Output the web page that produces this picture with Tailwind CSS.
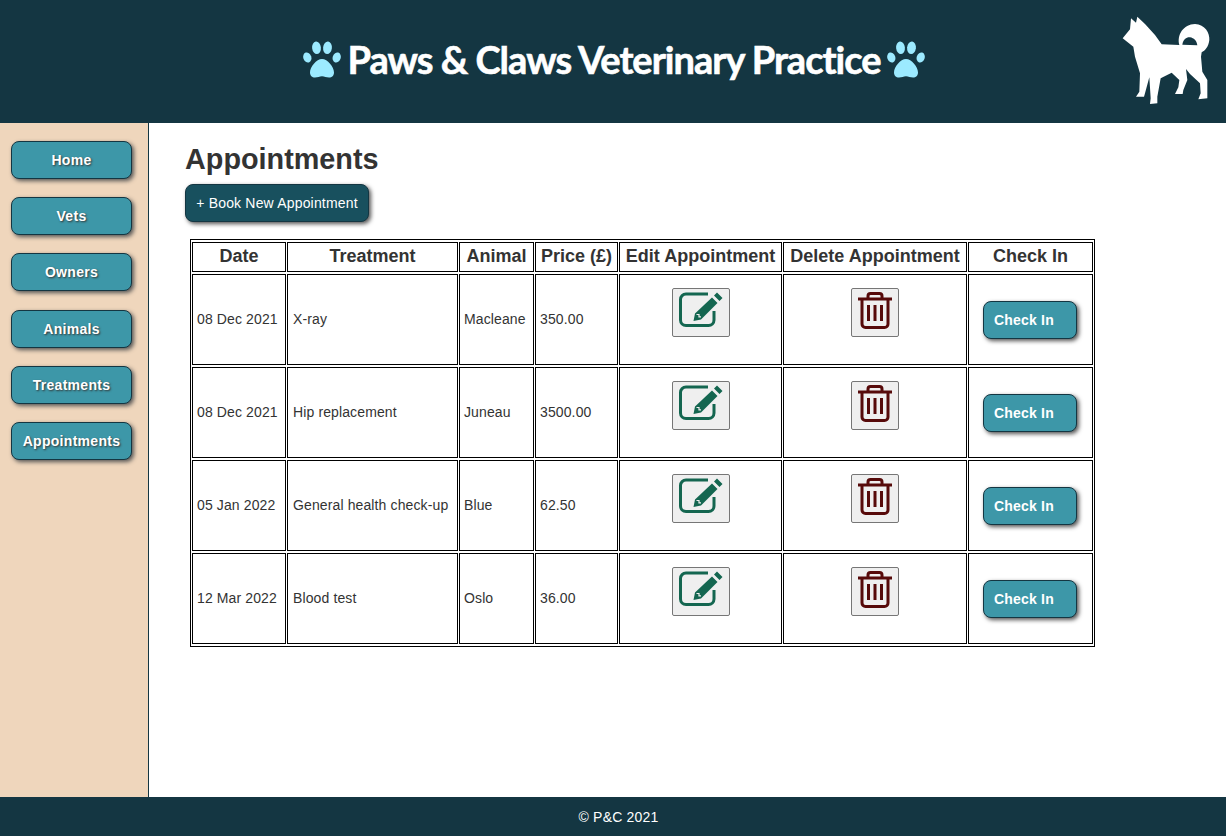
<!DOCTYPE html>
<html lang="en">
<head>
  <meta charset="UTF-8" />
  <title>Paws &amp; Claws Veterinary Practice</title>
  <script src="https://cdn.jsdelivr.net/npm/@tailwindcss/browser@4"></script>
</head>
<body class="h-[836px] flex flex-col overflow-hidden bg-white font-['Liberation_Sans',Arial,sans-serif] text-[#333]">
  <svg class="hidden">
    <symbol id="paw" viewBox="0 0 38 37">
      <ellipse cx="4.300" cy="16.500" rx="4" ry="5.200" transform="rotate(-18 4.300 16.500)" />
      <ellipse cx="13.500" cy="6.800" rx="4.400" ry="6.300" transform="rotate(-6 13.500 6.800)" />
      <ellipse cx="24.500" cy="6.800" rx="4.400" ry="6.300" transform="rotate(6 24.500 6.800)" />
      <ellipse cx="33.700" cy="16.500" rx="4" ry="5.200" transform="rotate(18 33.700 16.500)" />
      <path d="M19 18c-5.500 0-12 8-12 13.500 0 3 2 5 5 5 2.800 0 4.500-1.300 7-1.300s4.200 1.300 7 1.300c3 0 5-2 5-5C31 26 24.500 18 19 18z" />
    </symbol>
    <symbol id="edit" viewBox="0 0 44 35">
      <path d="M35 19v9a5.500 5.500 0 0 1-5.500 5.500H7A5.500 5.500 0 0 1 1.500 28V7.500A5.500 5.500 0 0 1 7 2h22" fill="none" stroke="currentColor" stroke-width="3" />
      <path d="M38 .5l5.500 5.500-3 3-5.500-5.500zM33 5.500l5.500 5.500-16.500 16.500-7.500 1.500 1.500-7.500z" fill="currentColor" />
      <path d="M17.500 22.500l2.500 0 0 2.300 2 0" fill="none" stroke="#efefef" stroke-width="1.200" />
    </symbol>
    <symbol id="trash" viewBox="0 0 34 37">
      <path d="M0 7h34" fill="none" stroke="currentColor" stroke-width="3" />
      <path d="M10 6.500V4a2.500 2.500 0 0 1 2.500-2.500h9A2.500 2.500 0 0 1 24 4v2.500" fill="none" stroke="currentColor" stroke-width="3" />
      <path d="M4 7v25a3.500 3.500 0 0 0 3.500 3.500h19A3.500 3.500 0 0 0 30 32V7" fill="none" stroke="currentColor" stroke-width="3" />
      <path d="M10.500 13v16M17 13v16M23.500 13v16" fill="none" stroke="currentColor" stroke-width="3" />
    </symbol>
  </svg>

  <header class="h-[123px] shrink-0 bg-[#143642] relative flex items-center justify-center gap-[6px] pb-[5px] pl-[2px]">
    <svg class="w-[38px] h-[37px] fill-[#9ceaff]"><use href="#paw" /></svg>
    <h1 class="font-['Lato',sans-serif] font-bold text-white text-[38px] leading-none tracking-[-1px] [-webkit-text-stroke:0.6px_white]">Paws &amp; Claws Veterinary Practice</h1>
    <svg class="w-[38px] h-[37px] fill-[#9ceaff]"><use href="#paw" /></svg>
    <svg class="absolute right-0 top-0 w-[126px] h-[125px] fill-white" viewBox="0 0 378 375">
      <path fill-rule="evenodd" d="M68 115L90 88 93 55 108 68 112 50 135 72 165 105 185 133 238 135C230 105 250 73 285 72 315 73 330 100 328 120 326 140 315 152 305 157L303 170 307 215 322 240 322 295 295 298 302 280 300 250 270 222 258 207 262 240 250 270 248 282 225 282 235 262 238 240 215 218 182 235 172 290 172 310 150 312 152 295 148 232 135 280 132 290 108 290 118 275 120 220 105 170 100 140 85 128ZM247 134C250 117 260 111 270 112 282 114 290 122 292 136Z" />
    </svg>
  </header>

  <div class="flex-1 flex min-h-0">
    <nav class="w-[149px] shrink-0 bg-[#efd6bc] border-r border-[#143642] pt-[18px] pl-[11px] flex flex-col gap-[18.200px]">
      <a class="w-[121px] h-[38px] flex items-center justify-center rounded-lg border border-[#143642] bg-[#3d97a8] text-white text-sm font-bold tracking-[0.3px] shadow-[2px_2px_4px_#555] [text-shadow:1px_1px_2px_#333]">Home</a>
      <a class="w-[121px] h-[38px] flex items-center justify-center rounded-lg border border-[#143642] bg-[#3d97a8] text-white text-sm font-bold tracking-[0.3px] shadow-[2px_2px_4px_#555] [text-shadow:1px_1px_2px_#333]">Vets</a>
      <a class="w-[121px] h-[38px] flex items-center justify-center rounded-lg border border-[#143642] bg-[#3d97a8] text-white text-sm font-bold tracking-[0.3px] shadow-[2px_2px_4px_#555] [text-shadow:1px_1px_2px_#333]">Owners</a>
      <a class="w-[121px] h-[38px] flex items-center justify-center rounded-lg border border-[#143642] bg-[#3d97a8] text-white text-sm font-bold tracking-[0.3px] shadow-[2px_2px_4px_#555] [text-shadow:1px_1px_2px_#333]">Animals</a>
      <a class="w-[121px] h-[38px] flex items-center justify-center rounded-lg border border-[#143642] bg-[#3d97a8] text-white text-sm font-bold tracking-[0.3px] shadow-[2px_2px_4px_#555] [text-shadow:1px_1px_2px_#333]">Treatments</a>
      <a class="w-[121px] h-[38px] flex items-center justify-center rounded-lg border border-[#143642] bg-[#3d97a8] text-white text-sm font-bold tracking-[0.3px] shadow-[2px_2px_4px_#555] [text-shadow:1px_1px_2px_#333]">Appointments</a>
    </nav>

    <main class="flex-1 pl-[36px] pt-[20px]">
      <h2 class="text-[28.800px] leading-[33px] font-bold text-[#333]">Appointments</h2>
      <button class="mt-[8px] block w-[184px] h-[38px] rounded-lg border border-[#143642] bg-[#18505e] text-white text-sm tracking-[0.18px] shadow-[2px_2px_4px_#555]">+ Book New Appointment</button>
      <table class="mt-[17px] ml-[5px] w-[905px] table-fixed border-separate border-spacing-x-[1px] border-spacing-y-[2px] border border-black text-sm text-[#333] tracking-[0.12px]">
        <colgroup>
          <col class="w-[94px]" /><col class="w-[171px]" /><col class="w-[75px]" /><col class="w-[83px]" /><col class="w-[163px]" /><col class="w-[184px]" /><col class="w-[125px]" />
        </colgroup>
        <thead>
          <tr class="h-[30px] text-lg leading-[22px] font-bold">
            <th class="border border-black tracking-normal pb-[3px]">Date</th>
            <th class="border border-black tracking-normal pb-[3px]">Treatment</th>
            <th class="border border-black tracking-normal pb-[3px]">Animal</th>
            <th class="border border-black tracking-normal pb-[3px] whitespace-nowrap">Price (£)</th>
            <th class="border border-black tracking-normal pb-[3px] whitespace-nowrap">Edit Appointment</th>
            <th class="border border-black tracking-normal pb-[3px] whitespace-nowrap">Delete Appointment</th>
            <th class="border border-black tracking-normal pb-[3px]">Check In</th>
          </tr>
        </thead>
        <tbody>
          <tr class="h-[91px]">
            <td class="border border-black pl-[4px] pb-[1px]">08 Dec 2021</td>
            <td class="border border-black pl-[5px] pb-[1px]">X-ray</td>
            <td class="border border-black pl-[4px] pb-[1px]">Macleane</td>
            <td class="border border-black pl-[4px] pb-[1px]">350.00</td>
            <td class="border border-black align-top pt-[13px]"><button class="mx-auto flex items-center justify-center w-[58px] h-[49px] pb-[7px] bg-[#efefef] border border-[#767676] rounded-[2px] text-[#146650]"><svg class="w-[44px] h-[35px]"><use href="#edit" /></svg></button></td>
            <td class="border border-black align-top pt-[13px]"><button class="mx-auto flex items-center justify-center w-[48px] h-[49px] pb-[5px] bg-[#efefef] border border-[#767676] rounded-[2px] text-[#570a0a]"><svg class="w-[34px] h-[37px]"><use href="#trash" /></svg></button></td>
            <td class="border border-black pl-[14px]"><button class="w-[94px] h-[38px] rounded-lg border border-[#143642] bg-[#3d97a8] text-white text-sm font-bold text-left pl-[10px] tracking-[0.2px] shadow-[2px_2px_4px_#555]">Check In</button></td>
          </tr>
          <tr class="h-[91px]">
            <td class="border border-black pl-[4px] pb-[1px]">08 Dec 2021</td>
            <td class="border border-black pl-[5px] pb-[1px]">Hip replacement</td>
            <td class="border border-black pl-[4px] pb-[1px]">Juneau</td>
            <td class="border border-black pl-[4px] pb-[1px]">3500.00</td>
            <td class="border border-black align-top pt-[13px]"><button class="mx-auto flex items-center justify-center w-[58px] h-[49px] pb-[7px] bg-[#efefef] border border-[#767676] rounded-[2px] text-[#146650]"><svg class="w-[44px] h-[35px]"><use href="#edit" /></svg></button></td>
            <td class="border border-black align-top pt-[13px]"><button class="mx-auto flex items-center justify-center w-[48px] h-[49px] pb-[5px] bg-[#efefef] border border-[#767676] rounded-[2px] text-[#570a0a]"><svg class="w-[34px] h-[37px]"><use href="#trash" /></svg></button></td>
            <td class="border border-black pl-[14px]"><button class="w-[94px] h-[38px] rounded-lg border border-[#143642] bg-[#3d97a8] text-white text-sm font-bold text-left pl-[10px] tracking-[0.2px] shadow-[2px_2px_4px_#555]">Check In</button></td>
          </tr>
          <tr class="h-[91px]">
            <td class="border border-black pl-[4px] pb-[1px]">05 Jan 2022</td>
            <td class="border border-black pl-[5px] pb-[1px]">General health check-up</td>
            <td class="border border-black pl-[4px] pb-[1px]">Blue</td>
            <td class="border border-black pl-[4px] pb-[1px]">62.50</td>
            <td class="border border-black align-top pt-[13px]"><button class="mx-auto flex items-center justify-center w-[58px] h-[49px] pb-[7px] bg-[#efefef] border border-[#767676] rounded-[2px] text-[#146650]"><svg class="w-[44px] h-[35px]"><use href="#edit" /></svg></button></td>
            <td class="border border-black align-top pt-[13px]"><button class="mx-auto flex items-center justify-center w-[48px] h-[49px] pb-[5px] bg-[#efefef] border border-[#767676] rounded-[2px] text-[#570a0a]"><svg class="w-[34px] h-[37px]"><use href="#trash" /></svg></button></td>
            <td class="border border-black pl-[14px]"><button class="w-[94px] h-[38px] rounded-lg border border-[#143642] bg-[#3d97a8] text-white text-sm font-bold text-left pl-[10px] tracking-[0.2px] shadow-[2px_2px_4px_#555]">Check In</button></td>
          </tr>
          <tr class="h-[91px]">
            <td class="border border-black pl-[4px] pb-[1px]">12 Mar 2022</td>
            <td class="border border-black pl-[5px] pb-[1px]">Blood test</td>
            <td class="border border-black pl-[4px] pb-[1px]">Oslo</td>
            <td class="border border-black pl-[4px] pb-[1px]">36.00</td>
            <td class="border border-black align-top pt-[13px]"><button class="mx-auto flex items-center justify-center w-[58px] h-[49px] pb-[7px] bg-[#efefef] border border-[#767676] rounded-[2px] text-[#146650]"><svg class="w-[44px] h-[35px]"><use href="#edit" /></svg></button></td>
            <td class="border border-black align-top pt-[13px]"><button class="mx-auto flex items-center justify-center w-[48px] h-[49px] pb-[5px] bg-[#efefef] border border-[#767676] rounded-[2px] text-[#570a0a]"><svg class="w-[34px] h-[37px]"><use href="#trash" /></svg></button></td>
            <td class="border border-black pl-[14px]"><button class="w-[94px] h-[38px] rounded-lg border border-[#143642] bg-[#3d97a8] text-white text-sm font-bold text-left pl-[10px] tracking-[0.2px] shadow-[2px_2px_4px_#555]">Check In</button></td>
          </tr>
        </tbody>
      </table>
    </main>
  </div>

  <footer class="h-[39px] shrink-0 bg-[#143642] text-white text-sm tracking-[0.2px] flex items-center justify-center pl-[11px]">© P&amp;C 2021</footer>
</body>
</html>
